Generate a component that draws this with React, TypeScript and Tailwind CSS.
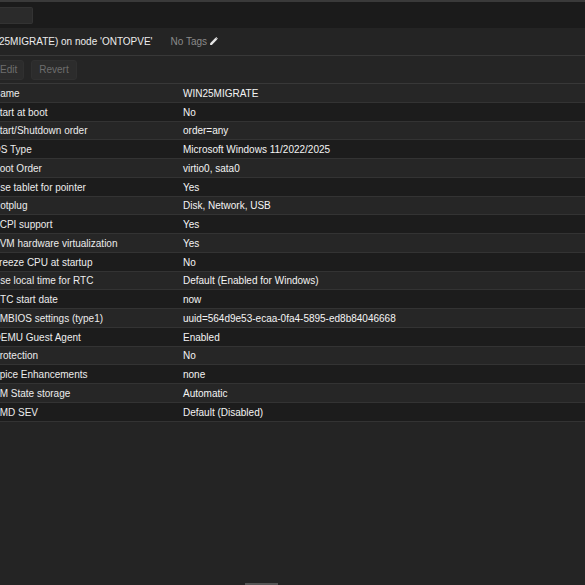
const rows: [string, string][] = [
  ["Name", "WIN25MIGRATE"],
  ["Start at boot", "No"],
  ["Start/Shutdown order", "order=any"],
  ["OS Type", "Microsoft Windows 11/2022/2025"],
  ["Boot Order", "virtio0, sata0"],
  ["Use tablet for pointer", "Yes"],
  ["Hotplug", "Disk, Network, USB"],
  ["ACPI support", "Yes"],
  ["KVM hardware virtualization", "Yes"],
  ["Freeze CPU at startup", "No"],
  ["Use local time for RTC", "Default (Enabled for Windows)"],
  ["RTC start date", "now"],
  ["SMBIOS settings (type1)", "uuid=564d9e53-ecaa-0fa4-5895-ed8b84046668"],
  ["QEMU Guest Agent", "Enabled"],
  ["Protection", "No"],
  ["Spice Enhancements", "none"],
  ["VM State storage", "Automatic"],
  ["AMD SEV", "Default (Disabled)"],
];

function Pencil() {
  return (
    <svg width="9" height="9" viewBox="0 0 16 16" className="ml-[2px]">
      <path d="M11.5 1.5l3 3L5 14H2v-3z" fill="#e6e6e6" />
      <path d="M12.8 0.2l3 3-1 1-3-3z" fill="#e6e6e6" />
    </svg>
  );
}

export default function App() {
  return (
    <div
      className="relative h-[585px] w-[585px] overflow-hidden bg-[#242424] text-[10px]"
      style={{ fontFamily: '"Liberation Sans", Arial, sans-serif' }}
    >
      {/* top tab bar */}
      <div className="h-[28px] border-t-2 border-[#3a3a3a] bg-[#1b1b1b] pt-[5px]">
        <div className="h-[17px] w-[33px] rounded-r-[2px] border border-l-0 border-[#333] bg-[#2b2b2b]" />
      </div>

      {/* title */}
      <div className="flex h-[28px] items-center border-b border-[#383838] bg-[#242424]">
        <span className="ml-[-1px] text-[10px] text-[#ececec]">
          25MIGRATE) on node &apos;ONTOPVE&apos;
        </span>
        <span className="ml-[18px] flex items-center text-[#8a8a8a]">
          No Tags
          <Pencil />
        </span>
      </div>

      {/* toolbar */}
      <div className="flex h-[28px] items-center gap-[7px] border-b border-[#383838] bg-[#252525]">
        <button className="ml-[-8px] h-[20px] rounded-[3px] border border-[#303030] bg-[#2c2c2c] pl-[7px] pr-[6px] text-[#6e6e6e]">
          Edit
        </button>
        <button className="h-[20px] rounded-[3px] border border-[#303030] bg-[#2c2c2c] px-[7px] text-[#6e6e6e]">
          Revert
        </button>
      </div>

      {/* grid */}
      <div>
        {rows.map(([label, value], i) => (
          <div
            key={label}
            className={`flex h-[18.75px] items-center border-b border-[#333] pt-px ${
              i % 2 === 0 ? "bg-[#262626]" : "bg-[#1c1c1c]"
            }`}
          >
            <div className="ml-[-7px] w-[190px] shrink-0 whitespace-nowrap text-[#ececec]">
              {label}
            </div>
            <div className="whitespace-nowrap text-[#f4f4f4]">{value}</div>
          </div>
        ))}
      </div>

      <div className="absolute bottom-0 left-[245px] h-[2px] w-[33px] bg-[#555]" />
    </div>
  );
}
